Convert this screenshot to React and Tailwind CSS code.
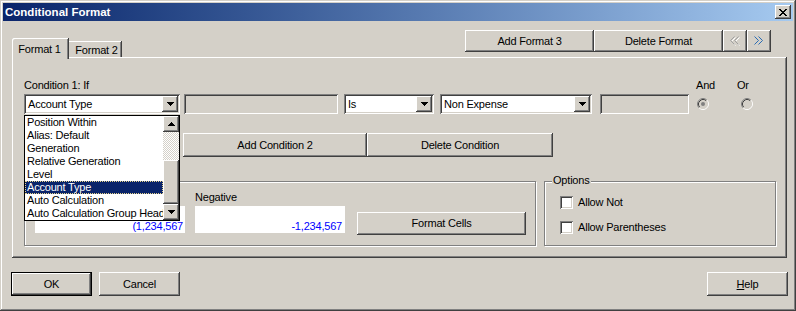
import React from "react";

// classic 3D borders
const RAISED =
  "shadow-[inset_-1px_-1px_#404040,inset_1px_1px_#fff,inset_-2px_-2px_#808080,inset_2px_2px_#d4d0c8]";
const SUNKEN =
  "shadow-[inset_1px_1px_#808080,inset_-1px_-1px_#fff,inset_2px_2px_#404040,inset_-2px_-2px_#d4d0c8]";
const DEFAULT_BTN =
  "shadow-[inset_0_0_0_1px_#000,inset_-2px_-2px_#404040,inset_2px_2px_#fff,inset_-3px_-3px_#808080,inset_3px_3px_#d4d0c8]";
const ETCHED = "border border-[#808080] shadow-[inset_1px_1px_#fff,1px_1px_#fff]";

const listItems = [
  "Position Within",
  "Alias: Default",
  "Generation",
  "Relative Generation",
  "Level",
  "Account Type",
  "Auto Calculation",
  "Auto Calculation Group Header",
];

function Tri({ up }) {
  const rows = [
    [0, 7],
    [1, 5],
    [2, 3],
    [3, 1],
  ];
  return (
    <svg width="7" height="4" shapeRendering="crispEdges">
      {rows.map(([x, w], i) => (
        <rect key={i} x={x} y={up ? 3 - i : i} width={w} height="1" fill="#000" />
      ))}
    </svg>
  );
}

function CloseGlyph() {
  const px = [
    [0, 0], [1, 0], [6, 0], [7, 0],
    [1, 1], [2, 1], [5, 1], [6, 1],
    [2, 2], [3, 2], [4, 2], [5, 2],
    [3, 3], [4, 3],
    [2, 4], [3, 4], [4, 4], [5, 4],
    [1, 5], [2, 5], [5, 5], [6, 5],
    [0, 6], [1, 6], [6, 6], [7, 6],
  ];
  return (
    <svg width="8" height="7" shapeRendering="crispEdges">
      {px.map(([x, y], i) => (
        <rect key={i} x={x} y={y} width="1" height="1" fill="#000" />
      ))}
    </svg>
  );
}

function Chevrons({ left, color }) {
  const a = left ? "4.5,0.5 0.5,4.5 4.5,8.5" : "0.5,0.5 4.5,4.5 0.5,8.5";
  const b = left ? "8.5,0.5 4.5,4.5 8.5,8.5" : "4.5,0.5 8.5,4.5 4.5,8.5";
  return (
    <svg width="10" height="10">
      {left && (
        <g transform="translate(1 1)" stroke="#fff" fill="none">
          <polyline points={a} />
          <polyline points={b} />
        </g>
      )}
      <g stroke={color} fill="none">
        <polyline points={a} />
        <polyline points={b} />
      </g>
    </svg>
  );
}

function Radio({ checked }) {
  return (
    <svg width="12" height="12">
      <circle cx="6" cy="6" r="5" fill="#d4d0c8" />
      <path d="M2.11 9.89 A5.5 5.5 0 0 1 9.89 2.11" stroke="#808080" fill="none" />
      <path d="M9.89 2.11 A5.5 5.5 0 0 1 2.11 9.89" stroke="#fff" fill="none" />
      <path d="M2.82 9.18 A4.5 4.5 0 0 1 9.18 2.82" stroke="#404040" fill="none" />
      <path d="M9.18 2.82 A4.5 4.5 0 0 1 2.82 9.18" stroke="#d4d0c8" fill="none" />
      {checked && <circle cx="6" cy="6" r="2" fill="#808080" />}
    </svg>
  );
}

function Btn({ className = "", children, def }) {
  return (
    <div
      className={`bg-[#d4d0c8] flex items-center justify-center whitespace-nowrap ${
        def ? DEFAULT_BTN : RAISED
      } ${className}`}
    >
      {children}
    </div>
  );
}

function Combo({ className = "", value, children }) {
  return (
    <div className={`relative h-[20px] bg-white flex items-center ${SUNKEN} ${className}`}>
      <span className="pl-[4px] flex-1 whitespace-nowrap overflow-hidden">{value}</span>
      <div className={`w-[16px] h-[16px] mr-[2px] bg-[#d4d0c8] flex items-center justify-center ${RAISED}`}>
        <Tri />
      </div>
      {children}
    </div>
  );
}

function DropList() {
  return (
    <div className="absolute left-0 top-[21px] z-20 w-[156px] h-[106px] border border-black bg-white flex">
      <div className="w-[138px] flex flex-col overflow-hidden">
        {listItems.map((t) => (
          <div
            key={t}
            className={`h-[13px] shrink-0 pl-[2px] whitespace-nowrap ${
              t === "Account Type"
                ? "bg-[#0a246a] text-white outline-1 outline-dotted outline-[#e6d38c] -outline-offset-1"
                : ""
            }`}
          >
            {t}
          </div>
        ))}
      </div>
      <div className="w-[16px] flex flex-col">
        <div className={`h-[16px] bg-[#d4d0c8] flex items-center justify-center ${RAISED}`}>
          <Tri up />
        </div>
        <div className="h-[28px] bg-[repeating-conic-gradient(#d4d0c8_0%_25%,#fff_0%_50%)] bg-[length:2px_2px]" />
        <div className={`h-[44px] bg-[#d4d0c8] ${RAISED}`} />
        <div className={`h-[16px] bg-[#d4d0c8] flex items-center justify-center ${RAISED}`}>
          <Tri />
        </div>
      </div>
    </div>
  );
}

export default function App() {
  return (
    <div className="w-[796px] h-[311px] overflow-hidden bg-[#d4d0c8] flex flex-col font-['Liberation_Sans',Arial,sans-serif] text-[11px] leading-[13px] tracking-[-0.2px] text-black shadow-[inset_-1px_-1px_#404040,inset_1px_1px_#d4d0c8,inset_-2px_-2px_#808080,inset_2px_2px_#fff]">
      {/* TITLE BAR */}
      <div className="mx-[3px] mt-[3px] h-[18px] flex items-center bg-linear-to-r from-[#0a246a] to-[#a6caf0]">
        <span className="pl-[2px] text-white font-bold text-[11.5px] tracking-normal">
          Conditional Format
        </span>
        <div className={`ml-auto mr-[2px] w-[16px] h-[14px] bg-[#d4d0c8] flex items-center justify-center ${RAISED}`}>
          <CloseGlyph />
        </div>
      </div>

      {/* TABS + FORMAT BUTTONS */}
      <div className="ml-[12px] mt-[9px] w-[775px] h-[27px] flex items-end">
        <div className="relative z-10 w-[57px] h-[21px] -mb-[2px] bg-[#d4d0c8] rounded-tl-[2px] flex justify-center pt-[5px] pr-[2px] shadow-[inset_-1px_0_#404040,inset_1px_1px_#fff,inset_-2px_0_#808080]">
          Format 1
        </div>
        <div className="w-[53px] h-[16px] flex justify-center pt-[3px] pl-[2px] shadow-[inset_-1px_0_#404040,inset_0_1px_#fff,inset_-2px_0_#808080]">
          Format 2
        </div>
        <div className="ml-auto mr-[16px] self-start flex">
          <Btn className="w-[129px] h-[22px]">Add Format 3</Btn>
          <Btn className="w-[129px] h-[22px]">Delete Format</Btn>
          <Btn className="w-[24px] h-[22px]">
            <Chevrons left color="#a0a0a0" />
          </Btn>
          <Btn className="w-[24px] h-[22px]">
            <Chevrons color="#2a6cb3" />
          </Btn>
        </div>
      </div>

      {/* TAB PANEL */}
      <div className="ml-[12px] w-[775px] h-[201px] flex flex-col pl-[12px] pt-[22px] shadow-[inset_-1px_-1px_#404040,inset_1px_1px_#fff,inset_-2px_-2px_#808080]">
        <div className="flex h-[13px]">
          <span className="w-[672px]">Condition 1: If</span>
          <span className="w-[41px]">And</span>
          <span>Or</span>
        </div>

        <div className="mt-[2px] h-[20px] flex items-center">
          <Combo className="w-[156px]" value="Account Type">
            <DropList />
          </Combo>
          <div className={`ml-[4px] w-[154px] h-[20px] ${SUNKEN}`} />
          <Combo className="ml-[6px] w-[90px]" value="Is" />
          <Combo className="ml-[6px] w-[152px]" value="Non Expense" />
          <div className={`ml-[8px] w-[89px] h-[20px] ${SUNKEN}`} />
          <div className="ml-[8px] flex">
            <Radio checked />
          </div>
          <div className="ml-[32px] flex">
            <Radio />
          </div>
        </div>

        <div className="mt-[19px] ml-[159px] flex">
          <Btn className="w-[184px] h-[24px]">Add Condition 2</Btn>
          <Btn className="w-[186px] h-[24px]">Delete Condition</Btn>
        </div>

        <div className="mt-[24px] flex">
          <div className={`relative w-[512px] h-[65px] flex items-start pl-[10px] pt-[9px] ${ETCHED}`}>
            {/* positive preview: its label sits under the open drop list */}
            <div className="w-[150px] flex flex-col">
              <div className="h-[13px]" />
              <div className="mt-[2px] h-[27px] bg-white flex items-end justify-end pr-[2px] text-[#0000ff]">
                (1,234,567
              </div>
            </div>
            <div className="ml-[10px] w-[150px] flex flex-col">
              <span>Negative</span>
              <div className="mt-[2px] h-[27px] bg-white flex items-end justify-end pr-[3px] text-[#0000ff]">
                -1,234,567
              </div>
            </div>
            <Btn className="ml-[12px] mt-[21px] w-[169px] h-[23px]">Format Cells</Btn>
          </div>

          <div className={`relative ml-[8px] w-[232px] h-[65px] flex flex-col pl-[15px] pt-[14px] ${ETCHED}`}>
            <span className="absolute left-[7px] -top-[8px] px-[1px] bg-[#d4d0c8]">Options</span>
            <div className="flex items-center h-[13px]">
              <div className={`w-[13px] h-[13px] bg-white ${SUNKEN}`} />
              <span className="ml-[5px]">Allow Not</span>
            </div>
            <div className="mt-[12px] flex items-center h-[13px]">
              <div className={`w-[13px] h-[13px] bg-white ${SUNKEN}`} />
              <span className="ml-[5px]">Allow Parentheses</span>
            </div>
          </div>
        </div>
      </div>

      {/* DIALOG BUTTONS */}
      <div className="mt-[14px] h-[24px] flex">
        <Btn def className="ml-[11px] w-[81px] h-[24px]">
          OK
        </Btn>
        <Btn className="ml-[7px] w-[81px] h-[24px]">Cancel</Btn>
        <Btn className="ml-auto mr-[8px] w-[81px] h-[24px]">
          <span>
            <span className="underline">H</span>elp
          </span>
        </Btn>
      </div>
    </div>
  );
}
